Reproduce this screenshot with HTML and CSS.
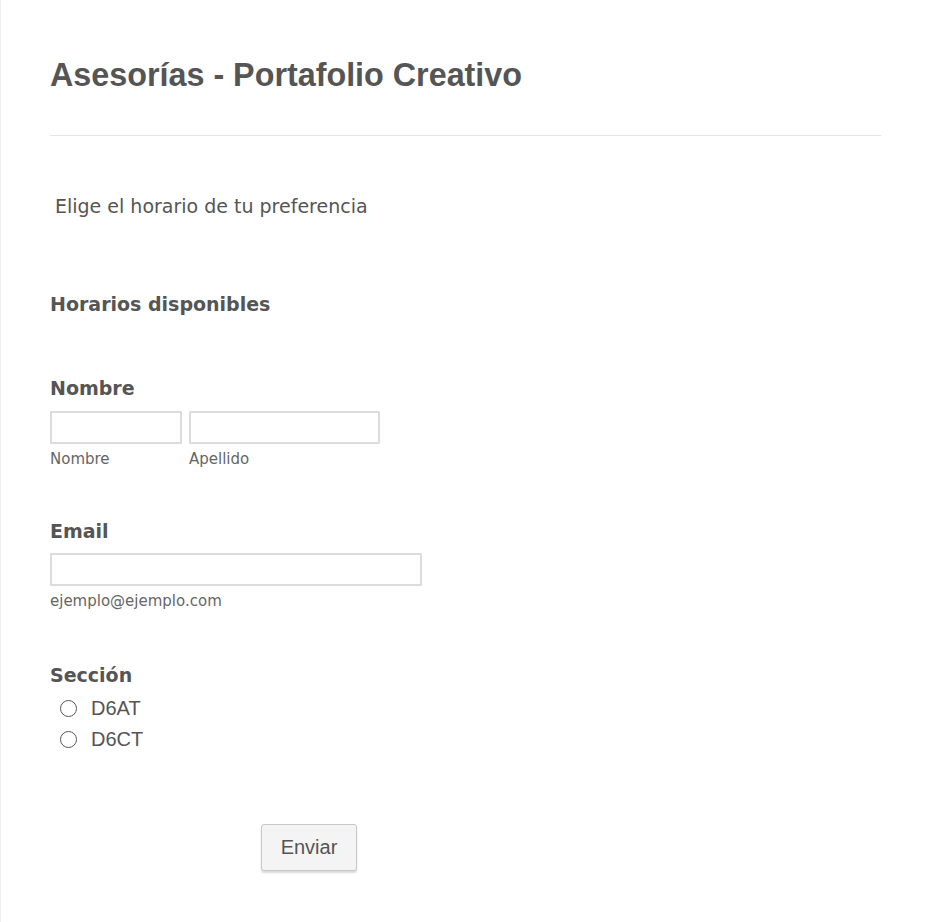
FILE: index.html
```html
<!DOCTYPE html>
<html lang="es">
<head>
<meta charset="utf-8">
<title>Asesorías - Portafolio Creativo</title>
<link rel="stylesheet" href="styles.css">
</head>
<body>
<form class="form">
  <header class="form-header">
    <h1 class="form-title">Asesorías - Portafolio Creativo</h1>
  </header>
  <p class="intro">Elige el horario de tu preferencia</p>
  <h2 class="section-title">Horarios disponibles</h2>

  <div class="field field-name">
    <label class="label">Nombre</label>
    <div class="name-row">
      <div class="sub first">
        <input class="input input-first" type="text">
        <span class="sublabel">Nombre</span>
      </div>
      <div class="sub last">
        <input class="input input-last" type="text">
        <span class="sublabel">Apellido</span>
      </div>
    </div>
  </div>

  <div class="field field-email">
    <label class="label">Email</label>
    <input class="input input-email" type="email">
    <span class="sublabel">ejemplo@ejemplo.com</span>
  </div>

  <div class="field field-radio">
    <label class="label">Sección</label>
    <div class="options">
      <label class="option"><span class="radio"></span><span class="option-text">D6AT</span></label>
      <label class="option"><span class="radio"></span><span class="option-text">D6CT</span></label>
    </div>
  </div>

  <div class="actions">
    <button class="submit" type="button">Enviar</button>
  </div>
</form>
</body>
</html>
```

FILE: styles.css
```css
* { box-sizing: border-box; }
html, body {
  margin: 0;
  padding: 0;
  background: #fff;
}
body {
  color: #555;
  font-family: "DejaVu Sans", Verdana, sans-serif;
}
.form {
  width: 930px;
  min-height: 922px;
  border-left: 1px solid #f0f0f0;
  padding: 0 49px 0 49px;
}
.form-header {
  padding-top: 55px;
  border-bottom: 1px solid #e6e6e6;
  padding-bottom: 40px;
}
.form-title {
  margin: 0;
  font-family: "Liberation Sans", Arial, sans-serif;
  font-weight: bold;
  font-size: 32.3px;
  line-height: 40px;
  color: #555;
}
.intro {
  margin: 58px 0 0 5px;
  font-size: 19px;
  line-height: 24px;
}
.section-title {
  margin: 74px 0 0 0;
  font-size: 19px;
  line-height: 24px;
  font-weight: bold;
}
.field { margin-top: 60px; }
.field-email { margin-top: 51px; }
.field-radio { margin-top: 53px; }
.label {
  display: block;
  font-weight: bold;
  font-size: 19px;
  line-height: 24px;
  margin-bottom: 10px;
}
.field-name .label { margin-bottom: 11px; }
.name-row {
  display: flex;
  gap: 7px;
}
.sub { display: flex; flex-direction: column; }
.input {
  display: block;
  height: 33px;
  border: 2px solid #dcdcdc;
  border-radius: 1px;
  background: #fff;
  margin: 0;
}
.input-first { width: 132px; }
.input-last { width: 191px; }
.input-email { width: 372px; }
.sublabel {
  display: block;
  font-size: 15px;
  line-height: 18px;
  margin-top: 6px;
  color: #666;
}
.options {
  display: flex;
  flex-direction: column;
  gap: 9px;
  padding-left: 10px;
  margin-top: 0;
}
.option {
  display: flex;
  align-items: center;
  gap: 14px;
  height: 22px;
}
.radio {
  width: 17px;
  height: 17px;
  border: 1.5px solid #555;
  border-radius: 50%;
  background: #fff;
}
.option-text {
  font-family: "Liberation Sans", Arial, sans-serif;
  font-size: 20px;
  color: #555;
}
.actions {
  margin-top: 74px;
  padding-left: 211px;
}
.submit {
  width: 96px;
  height: 47px;
  background: #f4f4f4;
  border: 1px solid #c8c8c8;
  border-radius: 3px;
  box-shadow: 0 2px 2px rgba(0,0,0,0.15);
  font-family: "Liberation Sans", Arial, sans-serif;
  font-size: 20px;
  color: #555;
  padding: 0;
}
```
